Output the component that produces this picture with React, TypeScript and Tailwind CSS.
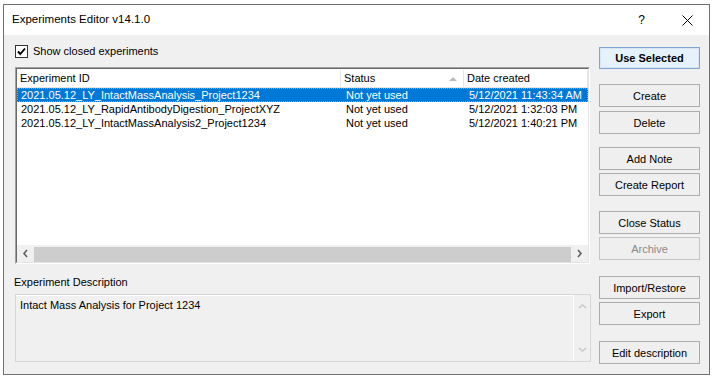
import React from "react";

const rows = [
  { id: "2021.05.12_LY_IntactMassAnalysis_Project1234", status: "Not yet used", date: "5/12/2021 11:43:34 AM" },
  { id: "2021.05.12_LY_RapidAntibodyDigestion_ProjectXYZ", status: "Not yet used", date: "5/12/2021 1:32:03 PM" },
  { id: "2021.05.12_LY_IntactMassAnalysis2_Project1234", status: "Not yet used", date: "5/12/2021 1:40:21 PM" },
];

function Btn({ label, mt, disabled }: { label: string; mt: string; disabled?: boolean }) {
  return (
    <div
      className={`${mt} h-[23px] w-[101px] pt-[1px] flex items-center justify-center border ${
        disabled ? "border-[#c4c4c4] text-[#8a8a8a]" : "border-[#adadad] text-black"
      } bg-[#efefef]`}
    >
      {label}
    </div>
  );
}

function Chevron({ dir, color }: { dir: "l" | "r" | "u" | "d"; color: string }) {
  const pts = {
    l: "6,1 3,4.5 6,8",
    r: "3,1 6,4.5 3,8",
    u: "1,6 4.5,3 8,6",
    d: "1,3 4.5,6 8,3",
  }[dir];
  return (
    <svg width="9" height="9" viewBox="0 0 9 9">
      <polyline points={pts} fill="none" stroke={color} strokeWidth="1.6" />
    </svg>
  );
}

export default function App() {
  return (
    <div className="w-[713px] h-[380px] bg-white overflow-hidden font-['Liberation_Sans',Arial,sans-serif] text-[11px] text-black">
      <div className="ml-[3px] mt-[4px] w-[707px] h-[371px] border border-[#707070] flex flex-col">
        {/* title bar */}
        <div className="h-[30px] bg-white flex items-center pl-[8px] shrink-0">
          <span className="text-[11.5px] text-black">Experiments Editor v14.1.0</span>
          <div className="flex-1" />
          <span className="text-[12px] leading-none mr-[37px]">?</span>
          <svg width="11" height="11" viewBox="0 0 11 11" className="mr-[16px]">
            <path d="M0.5 0.5 L10.5 10.5 M10.5 0.5 L0.5 10.5" stroke="#000" strokeWidth="1" />
          </svg>
        </div>

        {/* body */}
        <div className="flex-1 bg-[#f0f0f0] flex pl-[11px]">
          <div className="w-[576px] flex flex-col pt-[10px]">
            {/* checkbox */}
            <div className="flex items-center h-[13px]">
              <div className="w-[13px] h-[13px] border border-[#333] bg-white flex items-center justify-center">
                <svg width="11" height="11" viewBox="0 0 11 11">
                  <polyline points="2,5.5 4.3,8 9,2.5" fill="none" stroke="#000" strokeWidth="1.9" />
                </svg>
              </div>
              <span className="ml-[5px]">Show closed experiments</span>
            </div>

            {/* list */}
            <div className="mt-[9px] w-[575px] h-[197px] border border-t-[#a0a0a0] border-l-[#a0a0a0] border-r-white border-b-white">
              <div className="w-full h-full border border-t-[#696969] border-l-[#696969] border-r-[#e3e3e3] border-b-[#e3e3e3] bg-white flex flex-col overflow-hidden">
                <div className="h-[19px] pt-[1px] flex border-b border-[#e5e5e5] shrink-0">
                  <div className="w-[324px] border-r border-[#e5e5e5] pl-[3px] flex items-center">Experiment ID</div>
                  <div className="w-[123px] border-r border-[#e5e5e5] pl-[3px] flex items-center">
                    <span className="flex-1">Status</span>
                    <svg width="8" height="5" viewBox="0 0 8 5" className="mr-[6px]">
                      <polygon points="0,5 4,1 8,5" fill="#bcbcbc" />
                    </svg>
                  </div>
                  <div className="flex-1 border-r border-[#e5e5e5] pl-[3px] flex items-center">Date created</div>
                </div>
                <div className="flex-1">
                  {rows.map((r, i) => (
                    <div
                      key={r.id}
                      className={`h-[14px] leading-[12px] flex whitespace-nowrap ${
                        i === 0 ? "bg-[#0078d7] text-white border border-dotted border-[#ff8728]" : "border border-transparent"
                      }`}
                    >
                      <div className="w-[323px] pl-[3px]">{r.id}</div>
                      <div className="w-[123px] pl-[5px]">{r.status}</div>
                      <div className="flex-1 pl-[5px] overflow-hidden">{r.date}</div>
                    </div>
                  ))}
                </div>
                <div className="h-[17px] bg-[#f0f0f0] flex items-center shrink-0">
                  <div className="w-[17px] flex justify-center">
                    <Chevron dir="l" color="#606060" />
                  </div>
                  <div className="flex-1 h-[15px] mt-[1px] bg-[#cdcdcd]" />
                  <div className="w-[17px] flex justify-center">
                    <Chevron dir="r" color="#606060" />
                  </div>
                </div>
              </div>
            </div>

            <div className="mt-[12px] leading-[13px] ml-[-1px]">Experiment Description</div>

            {/* description */}
            <div className="mt-[5px] w-[576px] h-[68px] border border-[#d6d6d6] flex">
              <div className="flex-1 border-t border-white pl-[4px] pt-[1px]">Intact Mass Analysis for Project 1234</div>
              <div className="w-[17px] border-l border-white flex flex-col items-center justify-between py-[7px]">
                <Chevron dir="u" color="#c8c8c8" />
                <Chevron dir="d" color="#c8c8c8" />
              </div>
            </div>
          </div>

          {/* buttons */}
          <div className="ml-[8px] flex flex-col">
            <div className="mt-[12px] h-[22px] w-[101px] flex items-center justify-center border border-[#7ea6d3] bg-[#e5f1fb] font-bold shadow-[inset_0_0_0_1px_#d6e6f6]">
              Use Selected
            </div>
            <Btn label="Create" mt="mt-[15px]" />
            <Btn label="Delete" mt="mt-[4px]" />
            <Btn label="Add Note" mt="mt-[13px]" />
            <Btn label="Create Report" mt="mt-[3px]" />
            <Btn label="Close Status" mt="mt-[15px]" />
            <Btn label="Archive" mt="mt-[3px]" disabled />
            <Btn label="Import/Restore" mt="mt-[16px]" />
            <Btn label="Export" mt="mt-[3px]" />
            <Btn label="Edit description" mt="mt-[16px]" />
          </div>
        </div>
      </div>
    </div>
  );
}
